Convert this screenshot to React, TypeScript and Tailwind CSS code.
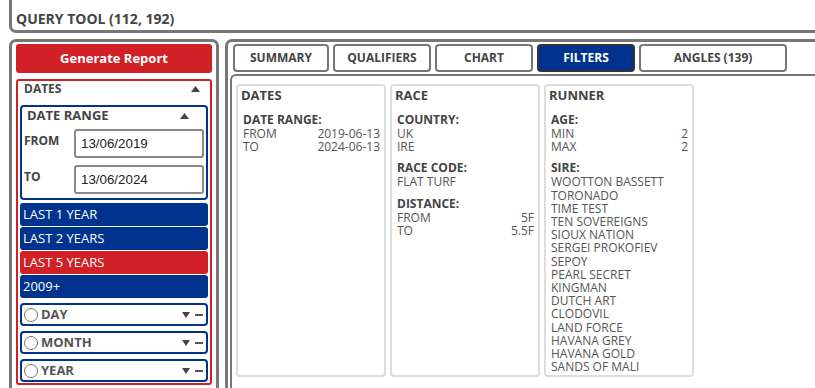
import React from "react";

const sires = [
  "WOOTTON BASSETT",
  "TORONADO",
  "TIME TEST",
  "TEN SOVEREIGNS",
  "SIOUX NATION",
  "SERGEI PROKOFIEV",
  "SEPOY",
  "PEARL SECRET",
  "KINGMAN",
  "DUTCH ART",
  "CLODOVIL",
  "LAND FORCE",
  "HAVANA GREY",
  "HAVANA GOLD",
  "SANDS OF MALI",
];

function Up() {
  return (
    <svg width="9" height="6" viewBox="0 0 9 6">
      <path d="M4.5 0 L9 6 L0 6 Z" fill="#444" />
    </svg>
  );
}

function Down() {
  return (
    <svg width="8" height="6" viewBox="0 0 8 6">
      <path d="M0 0 L8 0 L4 6 Z" fill="#444" />
    </svg>
  );
}

function Section({ title, children }: { title: string; children: React.ReactNode }) {
  return (
    <div className="mt-[8px] pl-[5px] pr-[4px]">
      <div className="text-[12px] font-bold leading-[14px] text-[#444]">{title}</div>
      {children}
    </div>
  );
}

function Row({ label, value }: { label: string; value?: string }) {
  return (
    <div className="flex justify-between text-[12px] leading-[13.2px] text-[#555]">
      <span>{label}</span>
      {value && <span>{value}</span>}
    </div>
  );
}

function Card({ title, children }: { title: string; children: React.ReactNode }) {
  return (
    <div className="w-[150px] rounded-[4px] border-2 border-[#ddd] pb-[2px]">
      <div className="h-[19px] pl-[3px] text-[13px] font-bold leading-[19px] text-[#444]">{title}</div>
      {children}
    </div>
  );
}

function Period({ label }: { label: string }) {
  return (
    <div className="mt-[5px] flex h-[23px] items-center rounded-[4px] border-2 border-[#00338d] bg-white pr-[3px]">
      <span className="ml-[2px] h-[14px] w-[14px] rounded-full border border-[#777] bg-white" />
      <span className="ml-[3px] flex-1 text-[13px] font-bold text-[#555]">{label}</span>
      <Down />
      <span className="ml-[5px] h-[2px] w-[8px] bg-[#555]" />
    </div>
  );
}

const tabs = [
  { label: "SUMMARY", w: "w-[96px]" },
  { label: "QUALIFIERS", w: "w-[98px]" },
  { label: "CHART", w: "w-[98px]" },
  { label: "FILTERS", w: "w-[98px]", active: true },
  { label: "ANGLES (139)", w: "w-[148px]" },
];

export default function App() {
  return (
    <div className="h-[388px] w-[815px] overflow-hidden bg-white font-['Open_Sans',sans-serif] text-[#444]">
      <div className="ml-[9px] h-[33px] rounded-bl-[7px] border-b-[3px] border-l-[3px] border-[#777] pl-[4px] pt-[9px]">
        <div className="text-[14px] font-bold leading-[20px] text-[#444]">QUERY TOOL (112, 192)</div>
      </div>

      <div className="mt-[6px] flex gap-[6px] pl-[9px]">
        <div className="h-[400px] w-[210px] shrink-0 rounded-[7px] border-[3px] border-[#777] px-[4px] pt-[2px]">
          <button className="h-[29px] w-full rounded-[3px] bg-[#d22027] text-[13px] font-bold text-white">
            Generate Report
          </button>

          <div className="mt-[6px] rounded-[3px] border-2 border-[#d22027] px-[2px] pb-[1px]">
            <div className="flex h-[16px] items-center justify-between pl-[4px] pr-[8px]">
              <span className="text-[12px] font-bold">DATES</span>
              <Up />
            </div>

            <div className="mt-[8px] rounded-[4px] border-2 border-[#00338d] pb-[4px] pr-[2px]">
              <div className="flex h-[17px] items-center justify-between pl-[5px] pr-[15px]">
                <span className="text-[13px] font-bold">DATE RANGE</span>
                <Up />
              </div>
              <div className="mt-[5px] flex items-center">
                <span className="-mt-[5px] w-[52px] pl-[2px] text-[12px] font-bold">FROM</span>
                <div className="flex h-[29px] w-[130px] items-center rounded-[3px] border-2 border-[#888] pl-[5px] font-['Liberation_Sans',Arial,sans-serif] text-[13.33px] text-[#222]">
                  13/06/2019
                </div>
              </div>
              <div className="mt-[7px] flex items-center">
                <span className="-mt-[5px] w-[52px] pl-[2px] text-[12px] font-bold">TO</span>
                <div className="flex h-[29px] w-[130px] items-center rounded-[3px] border-2 border-[#888] pl-[5px] font-['Liberation_Sans',Arial,sans-serif] text-[13.33px] text-[#222]">
                  13/06/2024
                </div>
              </div>
            </div>

            <div className="mt-[3px] flex flex-col gap-[1px]">
              {[
                { l: "LAST 1 YEAR", bg: "bg-[#00338d]" },
                { l: "LAST 2 YEARS", bg: "bg-[#00338d]" },
                { l: "LAST 5 YEARS", bg: "bg-[#d22027]" },
                { l: "2009+", bg: "bg-[#00338d]" },
              ].map((b) => (
                <div
                  key={b.l}
                  className={`flex h-[23px] items-center rounded-[3px] pl-[3px] text-[13px] text-white ${b.bg}`}
                >
                  {b.l}
                </div>
              ))}
            </div>

            <div className="mt-[1px]">
              <Period label="DAY" />
              <Period label="MONTH" />
              <Period label="YEAR" />
            </div>
          </div>
        </div>

        <div className="h-[400px] flex-1 rounded-tl-[7px] border-l-[3px] border-t-[3px] border-[#777] pl-[2px] pt-[2px]">
          <div className="flex gap-[4px] pl-[3px]">
            {tabs.map((t) => (
              <div
                key={t.label}
                className={`flex h-[28px] items-center justify-center rounded-[4px] border-2 text-[12px] font-bold ${t.w} ${
                  t.active ? "border-[#333] bg-[#00338d] text-white" : "border-[#777] bg-white text-[#444]"
                }`}
              >
                {t.label}
              </div>
            ))}
          </div>

          <div className="mt-[2px] h-[400px] rounded-tl-[6px] border-l-2 border-t-2 border-[#777] pl-[4px] pt-[8px]">
            <div className="flex items-stretch gap-[4px]">
              <Card title="DATES">
                <Section title="DATE RANGE:">
                  <Row label="FROM" value="2019-06-13" />
                  <Row label="TO" value="2024-06-13" />
                </Section>
              </Card>
              <Card title="RACE">
                <Section title="COUNTRY:">
                  <Row label="UK" />
                  <Row label="IRE" />
                </Section>
                <Section title="RACE CODE:">
                  <Row label="FLAT TURF" />
                </Section>
                <Section title="DISTANCE:">
                  <Row label="FROM" value="5F" />
                  <Row label="TO" value="5.5F" />
                </Section>
              </Card>
              <Card title="RUNNER">
                <Section title="AGE:">
                  <Row label="MIN" value="2" />
                  <Row label="MAX" value="2" />
                </Section>
                <Section title="SIRE:">
                  {sires.map((s) => (
                    <Row key={s} label={s} />
                  ))}
                </Section>
              </Card>
            </div>
          </div>
        </div>
      </div>
    </div>
  );
}
